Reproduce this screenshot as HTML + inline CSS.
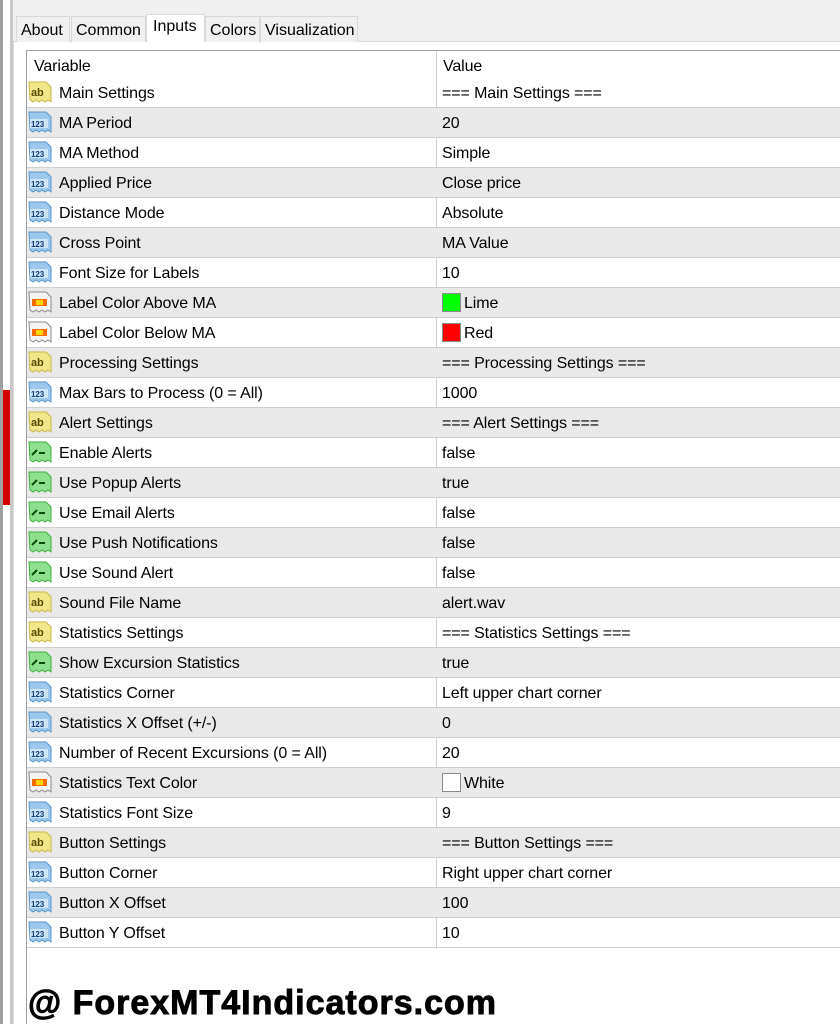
<!DOCTYPE html>
<html><head><meta charset="utf-8"><style>
*{margin:0;padding:0;box-sizing:border-box}
body{width:840px;height:1024px;overflow:hidden;background:#f0f0f0;font-family:"Liberation Sans",Arial,sans-serif;font-size:16px;color:#000;position:relative}
.strip{position:absolute;left:0;top:0;width:13px;height:1024px;background:#fff}
.strip .a{position:absolute;left:0;top:0;width:3px;height:1024px;background:#a0a0a0}
.strip .b{position:absolute;left:10px;top:0;width:3px;height:1024px;background:#c8c8c8}
.strip .r{position:absolute;left:3px;top:390px;width:7px;height:115px;background:#d40000}
.tabs{position:absolute;left:16px;top:14px;height:28px}
.tab{position:absolute;top:2px;height:26px;border:1px solid #d9d9d9;border-bottom:none;background:#f0f0f0;padding:5px 0 0 4px;font-size:16px}
.tab.act{top:0;height:28px;background:#fff;padding-top:3px}
.panel{position:absolute;left:13px;top:41px;width:827px;height:983px;background:#fff;border-left:1px solid #d9d9d9;border-top:1px solid #d9d9d9}
.grid{position:absolute;left:26px;top:50px;width:814px;height:974px;background:#fff;border-left:1px solid #a0a0a0;border-top:1px solid #a0a0a0;letter-spacing:-0.1px}
.hdr{position:absolute;left:0;top:0;width:814px;height:27px}
.hdr span{position:absolute;top:7px}
.row{position:absolute;left:0;width:814px;height:30px;border-bottom:1px solid #cfcfcf}
.row.g{background:#e9e9e9}
.row .n{position:absolute;left:32px;top:7px}
.row .v{position:absolute;left:415px;top:7px}
.row svg{position:absolute;left:1px;top:2px}
.vl{position:absolute;left:409px;top:0;width:1px;height:898px;background:#cfcfcf}
.sw{position:absolute;left:415px;top:5px;width:19px;height:19px;border:1px solid #8a8a8a}
.wm{position:absolute;left:28px;top:984px;font-size:34px;font-weight:bold;letter-spacing:1px;-webkit-text-stroke:0.9px #000}
</style></head><body>
<div class="strip"><div class="a"></div><div class="r"></div><div class="b"></div></div>
<div class="panel"></div>
<div class="tabs">
<div class="tab" style="left:0;width:54px">About</div>
<div class="tab" style="left:55px;width:75px">Common</div>
<div class="tab act" style="left:130px;width:59px;padding-left:6px">Inputs</div>
<div class="tab" style="left:189px;width:55px">Colors</div>
<div class="tab" style="left:244px;width:98px">Visualization</div>
</div>
<svg width="0" height="0" style="position:absolute">
<defs>
<symbol id="ab" viewBox="0 0 24 24"><path d="M1 2h17l5 5v15l-3-2-3 2-3-2-3 2-3-2-3 2-3-2z" fill="#f2e68a" stroke="#c9b545"/><text x="3" y="16" font-family="Liberation Sans" font-size="11" font-weight="bold" fill="#5a4a00">ab</text></symbol>
<symbol id="n" viewBox="0 0 24 24"><path d="M1 2h17l5 5v15l-3-2-3 2-3-2-3 2-3-2-3 2-3-2z" fill="#9cc8ee" stroke="#5a95c8"/><rect x="2" y="9" width="18" height="9" fill="#cfe4f7"/><text x="3" y="17" font-family="Liberation Sans" font-size="8" font-weight="bold" fill="#0a3a78">123</text></symbol>
<symbol id="c" viewBox="0 0 24 24"><path d="M1 2h17l5 5v15l-3-2-3 2-3-2-3 2-3-2-3 2-3-2z" fill="#f4f4f4" stroke="#8a8a8a"/><rect x="4" y="9" width="15" height="7" fill="#ff6a00"/><rect x="8" y="10" width="7" height="5" fill="#ffd700"/></symbol>
<symbol id="b" viewBox="0 0 24 24"><path d="M1 2h17l5 5v15l-3-2-3 2-3-2-3 2-3-2-3 2-3-2z" fill="#8ee08e" stroke="#3fae3f"/><path d="M4 15l5-5M11 13h6" stroke="#0a4a0a" stroke-width="2" fill="none"/></symbol>
</defs></svg>
<div class="grid">
<div class="hdr"><span style="left:7px">Variable</span><span style="left:416px">Value</span></div>
<div class="vl"></div>
<div class="row" style="top:27px"><svg width="24" height="24"><use href="#ab"/></svg><span class="n">Main Settings</span><span class="v">=== Main Settings ===</span></div>
<div class="row g" style="top:57px"><svg width="24" height="24"><use href="#n"/></svg><span class="n">MA Period</span><span class="v">20</span></div>
<div class="row" style="top:87px"><svg width="24" height="24"><use href="#n"/></svg><span class="n">MA Method</span><span class="v">Simple</span></div>
<div class="row g" style="top:117px"><svg width="24" height="24"><use href="#n"/></svg><span class="n">Applied Price</span><span class="v">Close price</span></div>
<div class="row" style="top:147px"><svg width="24" height="24"><use href="#n"/></svg><span class="n">Distance Mode</span><span class="v">Absolute</span></div>
<div class="row g" style="top:177px"><svg width="24" height="24"><use href="#n"/></svg><span class="n">Cross Point</span><span class="v">MA Value</span></div>
<div class="row" style="top:207px"><svg width="24" height="24"><use href="#n"/></svg><span class="n">Font Size for Labels</span><span class="v">10</span></div>
<div class="row g" style="top:237px"><svg width="24" height="24"><use href="#c"/></svg><span class="n">Label Color Above MA</span><div class="sw" style="background:#00ff00"></div><span class="v" style="left:437px">Lime</span></div>
<div class="row" style="top:267px"><svg width="24" height="24"><use href="#c"/></svg><span class="n">Label Color Below MA</span><div class="sw" style="background:#ff0000"></div><span class="v" style="left:437px">Red</span></div>
<div class="row g" style="top:297px"><svg width="24" height="24"><use href="#ab"/></svg><span class="n">Processing Settings</span><span class="v">=== Processing Settings ===</span></div>
<div class="row" style="top:327px"><svg width="24" height="24"><use href="#n"/></svg><span class="n">Max Bars to Process (0 = All)</span><span class="v">1000</span></div>
<div class="row g" style="top:357px"><svg width="24" height="24"><use href="#ab"/></svg><span class="n">Alert Settings</span><span class="v">=== Alert Settings ===</span></div>
<div class="row" style="top:387px"><svg width="24" height="24"><use href="#b"/></svg><span class="n">Enable Alerts</span><span class="v">false</span></div>
<div class="row g" style="top:417px"><svg width="24" height="24"><use href="#b"/></svg><span class="n">Use Popup Alerts</span><span class="v">true</span></div>
<div class="row" style="top:447px"><svg width="24" height="24"><use href="#b"/></svg><span class="n">Use Email Alerts</span><span class="v">false</span></div>
<div class="row g" style="top:477px"><svg width="24" height="24"><use href="#b"/></svg><span class="n">Use Push Notifications</span><span class="v">false</span></div>
<div class="row" style="top:507px"><svg width="24" height="24"><use href="#b"/></svg><span class="n">Use Sound Alert</span><span class="v">false</span></div>
<div class="row g" style="top:537px"><svg width="24" height="24"><use href="#ab"/></svg><span class="n">Sound File Name</span><span class="v">alert.wav</span></div>
<div class="row" style="top:567px"><svg width="24" height="24"><use href="#ab"/></svg><span class="n">Statistics Settings</span><span class="v">=== Statistics Settings ===</span></div>
<div class="row g" style="top:597px"><svg width="24" height="24"><use href="#b"/></svg><span class="n">Show Excursion Statistics</span><span class="v">true</span></div>
<div class="row" style="top:627px"><svg width="24" height="24"><use href="#n"/></svg><span class="n">Statistics Corner</span><span class="v">Left upper chart corner</span></div>
<div class="row g" style="top:657px"><svg width="24" height="24"><use href="#n"/></svg><span class="n">Statistics X Offset (+/-)</span><span class="v">0</span></div>
<div class="row" style="top:687px"><svg width="24" height="24"><use href="#n"/></svg><span class="n">Number of Recent Excursions (0 = All)</span><span class="v">20</span></div>
<div class="row g" style="top:717px"><svg width="24" height="24"><use href="#c"/></svg><span class="n">Statistics Text Color</span><div class="sw" style="background:#fff"></div><span class="v" style="left:437px">White</span></div>
<div class="row" style="top:747px"><svg width="24" height="24"><use href="#n"/></svg><span class="n">Statistics Font Size</span><span class="v">9</span></div>
<div class="row g" style="top:777px"><svg width="24" height="24"><use href="#ab"/></svg><span class="n">Button Settings</span><span class="v">=== Button Settings ===</span></div>
<div class="row" style="top:807px"><svg width="24" height="24"><use href="#n"/></svg><span class="n">Button Corner</span><span class="v">Right upper chart corner</span></div>
<div class="row g" style="top:837px"><svg width="24" height="24"><use href="#n"/></svg><span class="n">Button X Offset</span><span class="v">100</span></div>
<div class="row" style="top:867px"><svg width="24" height="24"><use href="#n"/></svg><span class="n">Button Y Offset</span><span class="v">10</span></div>
</div>
<div class="wm">@ ForexMT4Indicators.com</div>
</body></html>
